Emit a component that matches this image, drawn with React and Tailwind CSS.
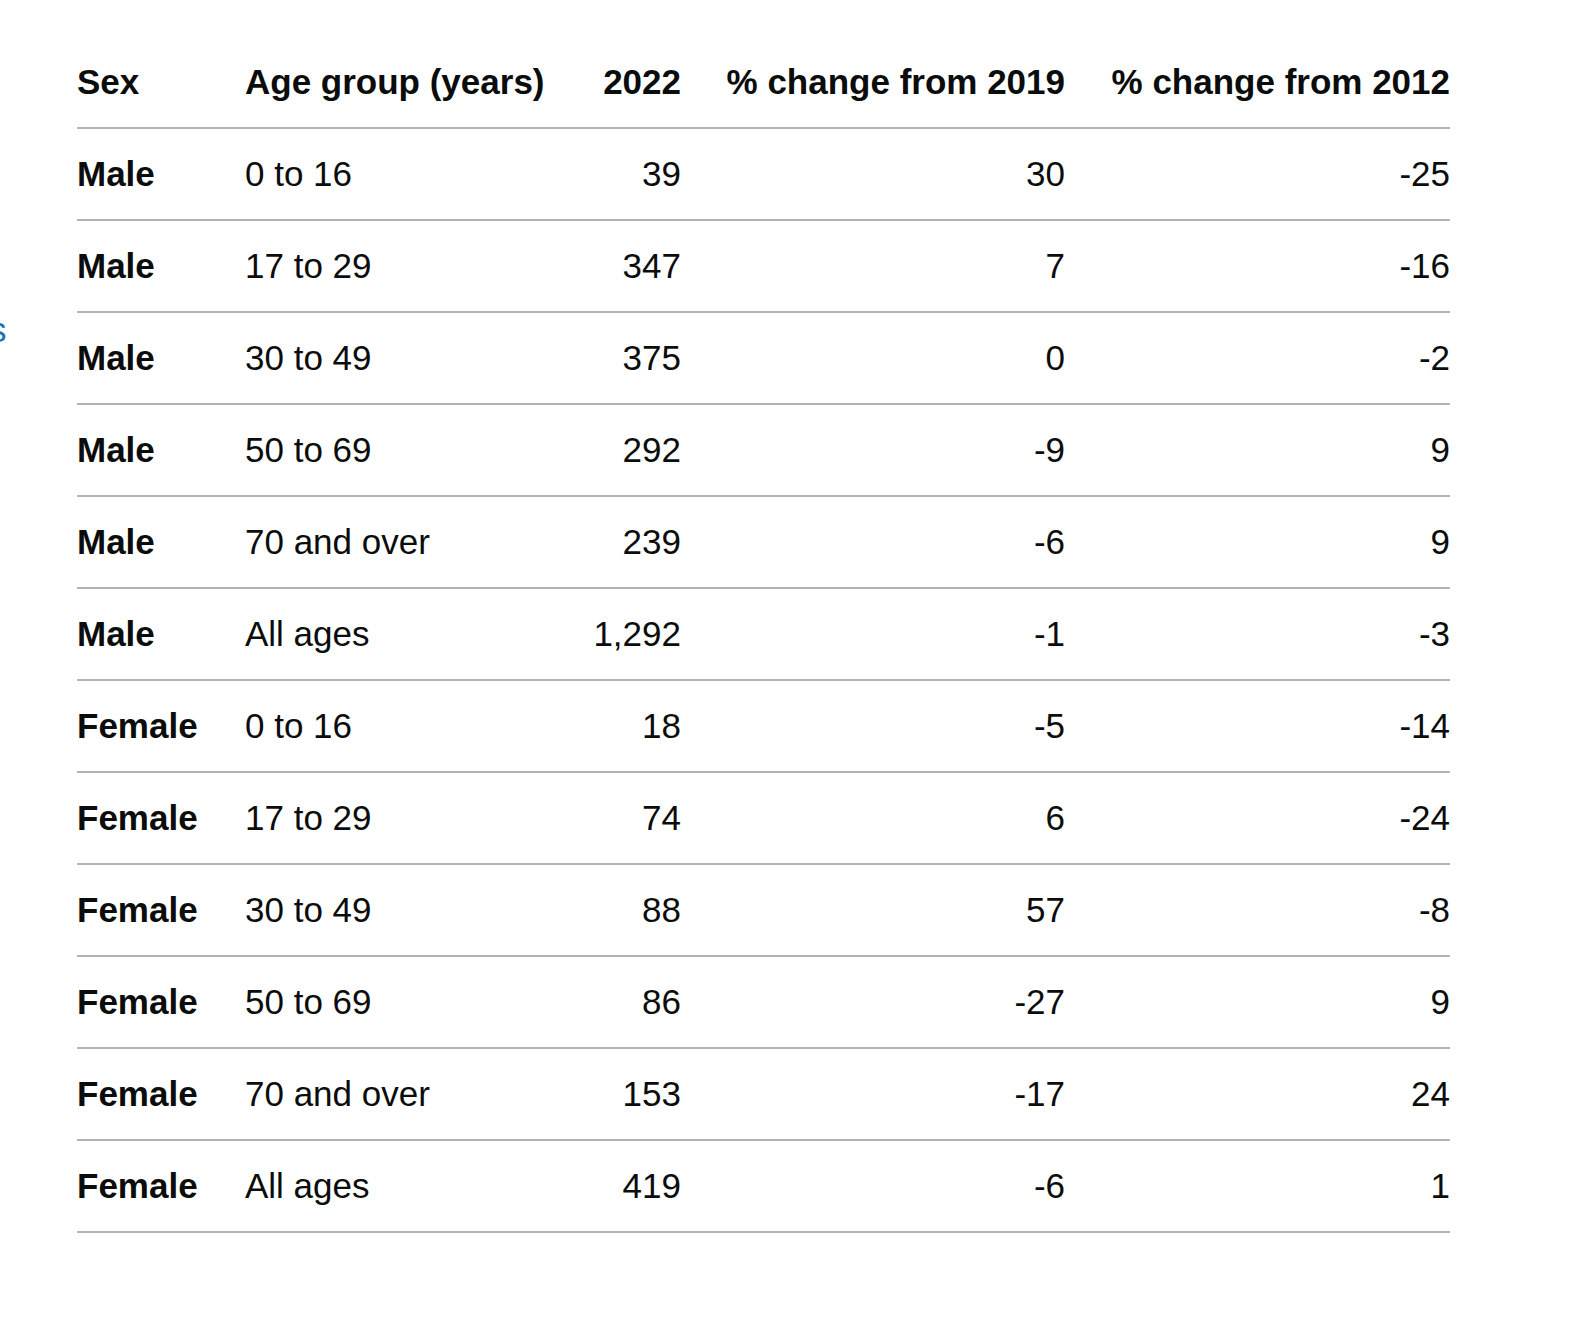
const rows = [
  ['Male', '0 to 16', '39', '30', '-25'],
  ['Male', '17 to 29', '347', '7', '-16'],
  ['Male', '30 to 49', '375', '0', '-2'],
  ['Male', '50 to 69', '292', '-9', '9'],
  ['Male', '70 and over', '239', '-6', '9'],
  ['Male', 'All ages', '1,292', '-1', '-3'],
  ['Female', '0 to 16', '18', '-5', '-14'],
  ['Female', '17 to 29', '74', '6', '-24'],
  ['Female', '30 to 49', '88', '57', '-8'],
  ['Female', '50 to 69', '86', '-27', '9'],
  ['Female', '70 and over', '153', '-17', '24'],
  ['Female', 'All ages', '419', '-6', '1'],
]

const cell = 'py-[20px] border-b-2 border-[#b1b4b6] whitespace-nowrap'

function Row({ cells, head }) {
  return (
    <>
      <div className={`${cell} font-bold`}>{cells[0]}</div>
      <div className={`${cell} ${head ? 'font-bold' : ''}`}>{cells[1]}</div>
      <div className={`${cell} pr-[40px] text-right ${head ? 'font-bold' : ''}`}>{cells[2]}</div>
      <div className={`${cell} pr-[40px] text-right ${head ? 'font-bold' : ''}`}>{cells[3]}</div>
      <div className={`${cell} text-right ${head ? 'font-bold' : ''}`}>{cells[4]}</div>
    </>
  )
}

export default function App() {
  return (
    <div
      className="min-h-[1330px] bg-white text-[#0b0c0c] text-[35px] leading-[50px] flex pt-[37px]"
      style={{ fontFamily: '"Liberation Sans", Arial, sans-serif' }}
    >
      {/* cut-off sidebar link */}
      <div className="w-[77px] shrink-0 overflow-hidden">
        <span className="block -ml-[11px] mt-[268px] text-[#1d70b8]">s</span>
      </div>

      <div className="grid grid-cols-[168px_342px_134px_384px_345px] self-start">
        <Row head cells={['Sex', 'Age group (years)', '2022', '% change from 2019', '% change from 2012']} />
        {rows.map((r, i) => (
          <Row key={i} cells={r} />
        ))}
      </div>
    </div>
  )
}
